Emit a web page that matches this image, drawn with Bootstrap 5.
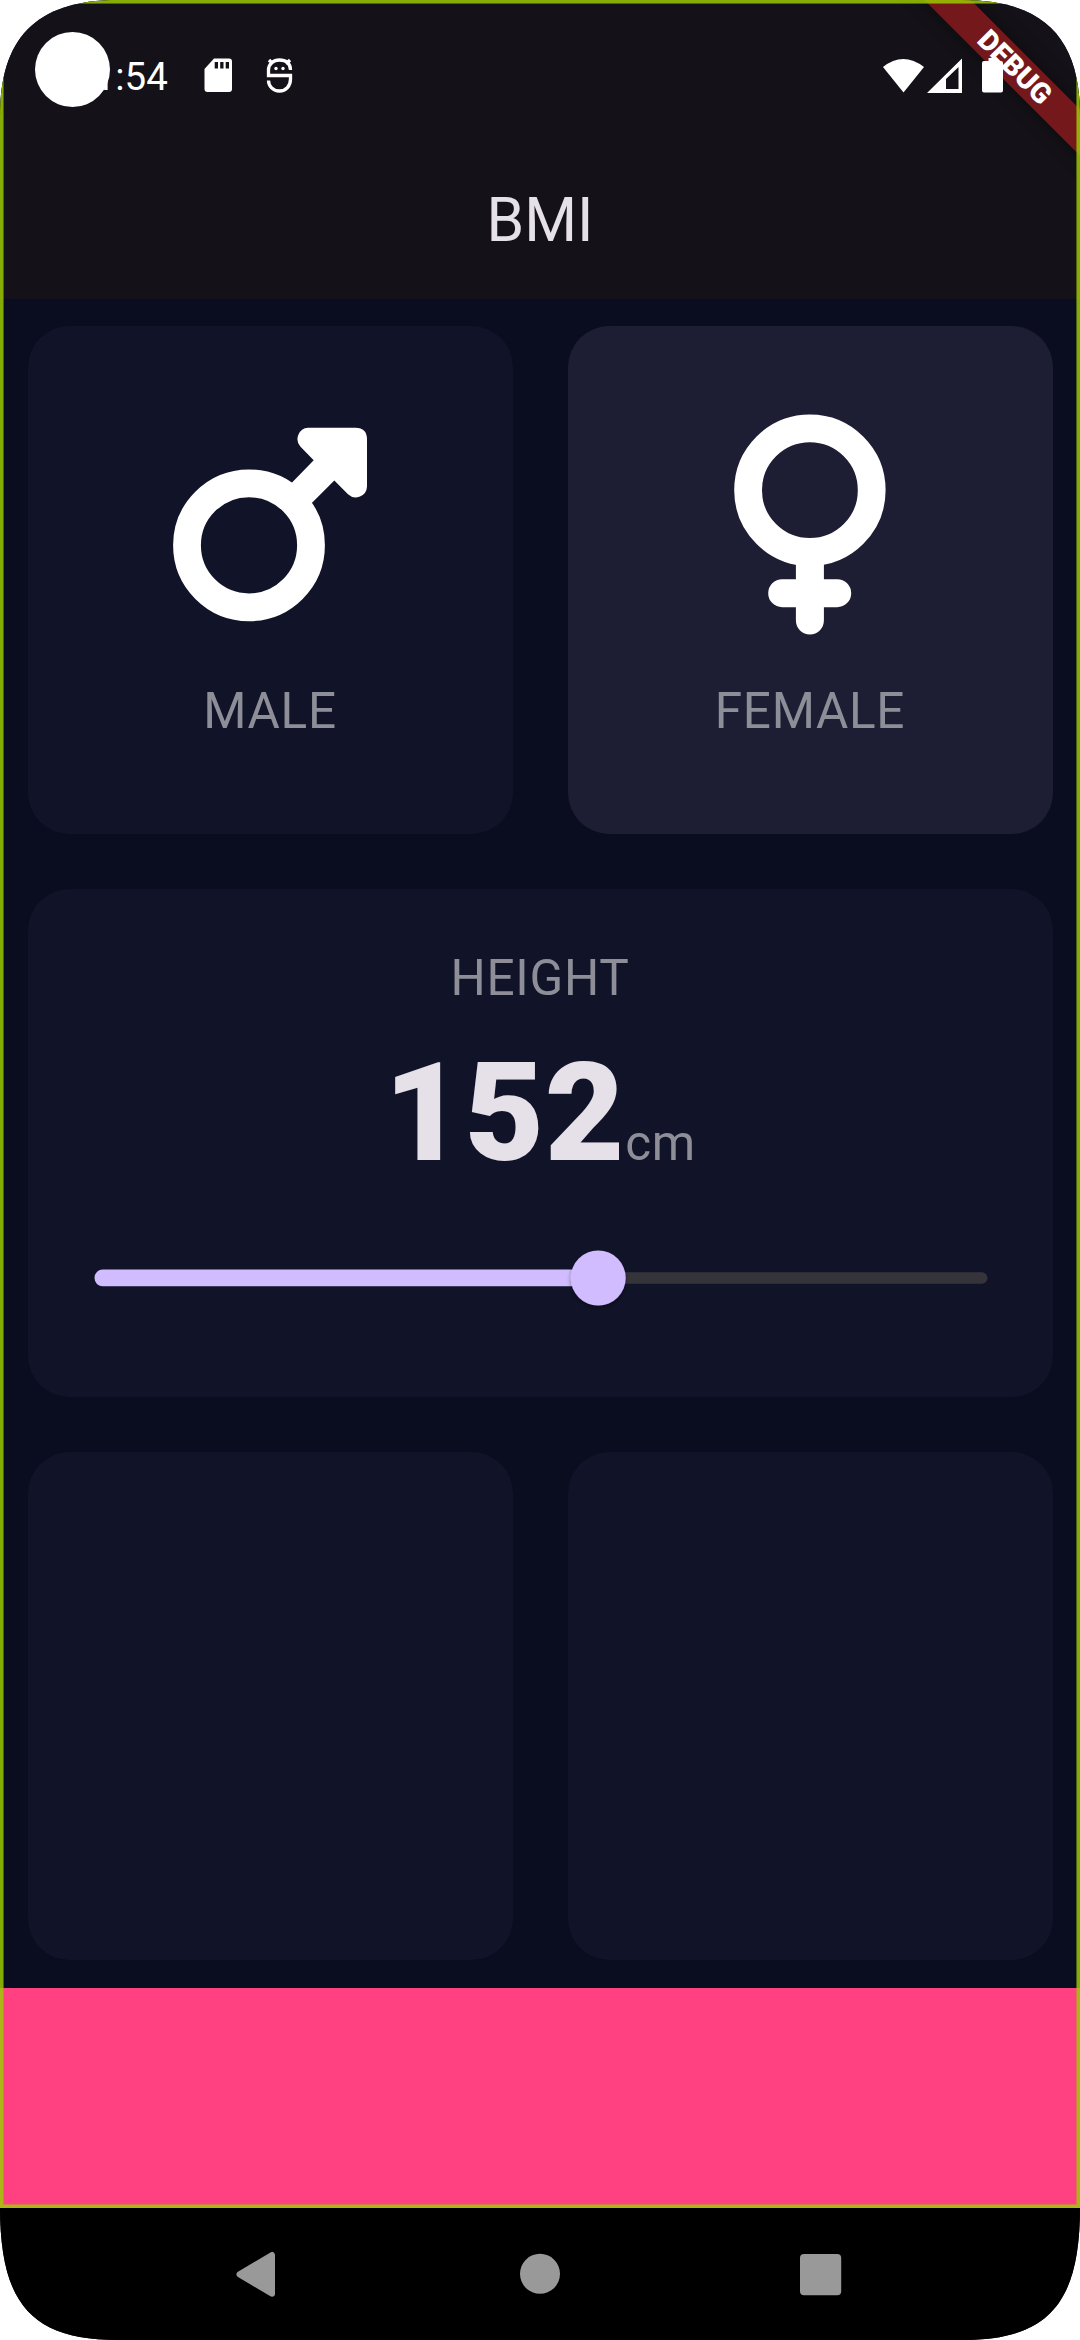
<!DOCTYPE html>
<html lang="en">
<head>
<meta charset="utf-8">
<meta name="viewport" content="width=device-width, initial-scale=1">
<title>BMI</title>
<link href="https://cdn.jsdelivr.net/npm/bootstrap@5.3.0/dist/css/bootstrap.min.css" rel="stylesheet">
<style>
  body { background: #fff; font-family: Roboto, "Noto Sans", sans-serif; margin: 0; }
  .device { width: 1080px; height: 2340px; background: #090d1f; clip-path: path("M0 116C0 40 34 0 118 0H962C1046 0 1080 40 1080 116V2207C1080 2304 1048 2340 962 2340H118C32 2340 0 2304 0 2207Z"); }
  .topbar { height: 299px; background: #141218; }
  .statusbar { height: 152px; z-index: 3; }
  .clock { font-size: 38.5px; line-height: 46px; color: #fff; margin: 54px 0 0 72px; }
  .glyphs { margin-top: 54px; }
  .app-title { height: 137px; font-size: 60.5px; color: #e6e0e9; line-height: 1; padding-top: 1px; }
  .camera { left: 35px; top: 32px; width: 75px; height: 75px; background: #fff; z-index: 4; }
  .bmi-row { height: 563px; }
  .bmi-card { margin: 27px 27.5px 28px; border-radius: 41.25px; background: #111328; }
  .bmi-card.picked { background: #1d1e33; }
  .label-text { font-size: 49.5px; line-height: 58px; letter-spacing: .69px; color: #8d8e98; }
  .gender-icon { width: 220px; height: 220px; margin-bottom: 41px; overflow: visible; }
  .number { font-size: 137.5px; line-height: 161px; font-weight: 900; letter-spacing: .69px; color: #e6e0e9; }
  .number-line { margin-top: 26px; }
  .height-card { padding-top: 60px; }
  .slider { padding-left: 66px; }
  .calc { height: 220px; background: #ff4081; }
  .navkeys { height: 132px; background: #000; gap: 233px; }
  .debug-banner { left: 884px; top: 49.5px; width: 260px; height: 33px; line-height: 33px; transform: rotate(45deg); background: #75181b; color: #fff; font-size: 28.5px; font-weight: 900; text-indent: 2px; box-shadow: 0 0 16px rgba(0,0,0,.5); z-index: 1; }
  .app-outline { left: 0; top: 0; width: 1080px; height: 2208px; border: 3px solid rgba(158,204,0,.83); box-shadow: inset 0 0 0 1px rgba(158,204,0,.45); z-index: 2; }
</style>
</head>
<body>
<div class="device position-relative d-flex flex-column overflow-hidden">
  <header class="topbar">
    <div class="statusbar position-relative d-flex align-items-start">
      <div class="clock">11:54</div>
      <svg class="glyphs" width="150" height="44" viewBox="168 54 150 44">
        <path fill="#fff" d="M214 58.500H229Q232 58.500 232 61.500V89Q232 92 229 92H207.500Q204.500 92 204.500 89V69Z"/>
        <path fill="#141218" d="M214.700 62H218V68.500H214.700ZM220.200 62H223.500V68.500H220.200ZM225.700 62H229V68.500H225.700Z"/>
        <path fill="none" stroke="#fff" stroke-width="3.300" d="M290.500 70C290.500 63 285.500 60 279.500 60S268.500 64 268.500 70V75.500H290.500V79C290.500 86 286 91 279.500 91S268.500 86 268.500 80.500M269 60L273 64M290 60L286 64"/>
        <circle cx="276" cy="68.500" r="1.700" fill="#fff"/><circle cx="283" cy="68.500" r="1.700" fill="#fff"/>
      </svg>
      <svg class="glyphs ms-auto me-5" width="150" height="44" viewBox="882 54 150 44">
        <path fill="#fff" d="M883 67Q903 51 924 67L903.500 92.500Z"/>
        <path fill="#fff" fill-rule="evenodd" d="M962 58.500V93H927ZM958.500 67L946 79V89H958.500Z"/>
        <path fill="#fff" d="M988.500 58H997V61H1001Q1003 61 1003 63V90.500Q1003 92.500 1001 92.500H984Q982 92.500 982 90.500V63Q982 61 984 61H988.500Z"/>
      </svg>
    </div>
    <div class="app-title d-flex align-items-center justify-content-center">BMI</div>
  </header>

  <main>
    <div class="bmi-row d-flex">
      <div class="bmi-card flex-fill w-50 d-flex flex-column align-items-center justify-content-center">
        <svg class="gender-icon" viewBox="160 420.500 220 220">
          <circle cx="249" cy="544.800" r="62" fill="none" stroke="#fff" stroke-width="27.800"/>
          <path fill="#fff" d="M308 427.300H355.500Q367 427.300 367 439V486A11.300 11.300 0 0 1 348 493.800L334.300 480L312.300 502L302 511L283 492L292.300 481.700L313.700 459.700L300.300 446A11.300 11.300 0 0 1 308 427.300Z"/>
        </svg>
        <div class="label-text">MALE</div>
      </div>
      <div class="bmi-card picked flex-fill w-50 d-flex flex-column align-items-center justify-content-center">
        <svg class="gender-icon" viewBox="700 420.500 220 220">
          <circle cx="809.900" cy="489.700" r="61.800" fill="none" stroke="#fff" stroke-width="27.800"/>
          <path fill="none" stroke="#fff" stroke-width="28" stroke-linecap="round" d="M809.900 560V620M782.200 592.700H837.200"/>
        </svg>
        <div class="label-text">FEMALE</div>
      </div>
    </div>
    <div class="bmi-row d-flex">
      <div class="bmi-card height-card flex-fill d-flex flex-column">
        <div class="label-text text-center">HEIGHT</div>
        <div class="number-line d-flex justify-content-center align-items-baseline"><span class="number">152</span><span class="label-text">cm</span></div>
        <div class="slider">
          <svg class="d-block" width="894" height="169" viewBox="93.500 1194 894 169">
            <defs><filter id="thumbShadow" x="-30%" y="-30%" width="160%" height="160%"><feDropShadow dx="0" dy="2" stdDeviation="2" flood-color="#000" flood-opacity=".4"/></filter></defs>
            <rect x="580" y="1272.300" width="407" height="11.400" rx="5.500" fill="#36343b"/>
            <rect x="94" y="1269.500" width="510" height="16.800" rx="8.200" fill="#d0bcff"/>
            <circle cx="597.700" cy="1278" r="27.500" fill="#d0bcff" filter="url(#thumbShadow)"/>
          </svg>
        </div>
      </div>
    </div>
    <div class="bmi-row d-flex">
      <div class="bmi-card flex-fill w-50"></div>
      <div class="bmi-card flex-fill w-50"></div>
    </div>
  </main>
  <div class="calc"></div>
  <nav class="navkeys d-flex justify-content-center align-items-center">
    <svg width="48" height="48" viewBox="235 2250 48 48"><path fill="#999" stroke="#999" stroke-width="6" stroke-linejoin="round" d="M239.500 2274.300L272 2255V2293.700Z"/></svg>
    <svg width="48" height="48" viewBox="516 2250 48 48"><circle cx="540" cy="2273.800" r="20" fill="#999"/></svg>
    <svg width="48" height="48" viewBox="797 2250 48 48"><rect x="800" y="2254" width="41.200" height="41.200" rx="4" fill="#999"/></svg>
  </nav>
  <div class="debug-banner position-absolute text-center">DEBUG</div>
  <div class="app-outline position-absolute"></div>
  <div class="camera position-absolute rounded-circle"></div>
</div>
<script src="https://cdn.jsdelivr.net/npm/bootstrap@5.3.0/dist/js/bootstrap.bundle.min.js"></script>
</body>
</html>
